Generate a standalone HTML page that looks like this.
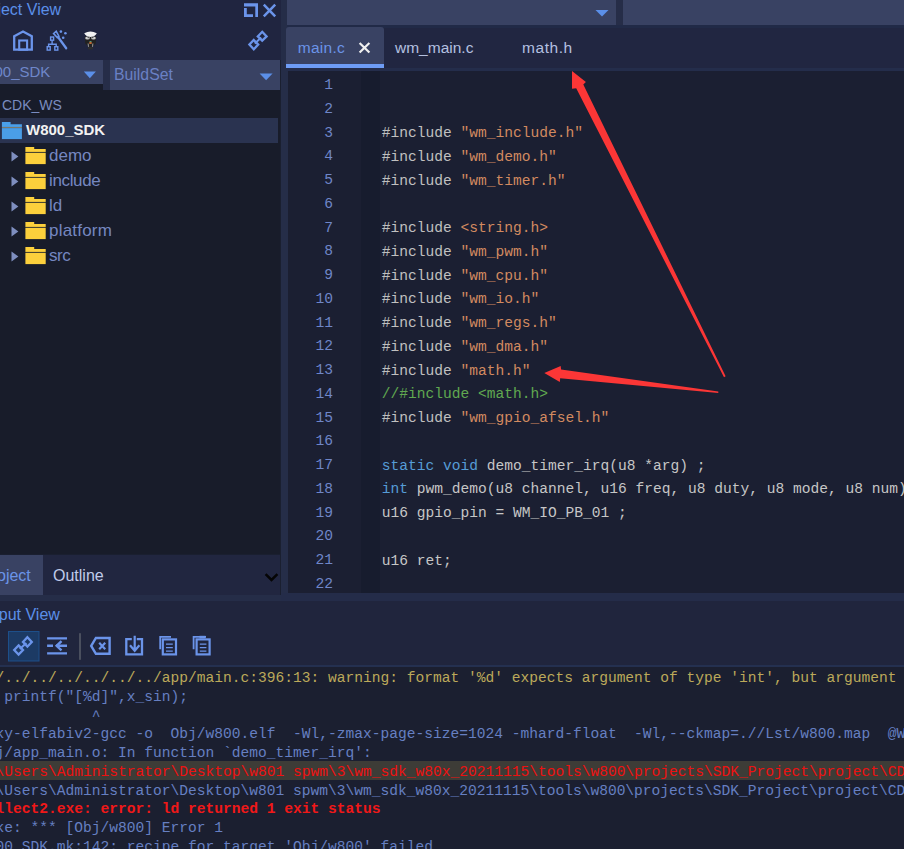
<!DOCTYPE html>
<html><head><meta charset="utf-8">
<style>
*{margin:0;padding:0;box-sizing:border-box}
html,body{width:904px;height:849px;overflow:hidden;background:#1a1f30;font-family:"Liberation Sans",sans-serif}
.a{position:absolute}
.t{position:absolute;white-space:pre;line-height:1}
.mono{font-family:"Liberation Mono",monospace}
i{font-style:normal}
.p{color:#c0c0c0}.s{color:#d28a60}.c{color:#60a850}.k{color:#569cd6}
.oy{color:#bba95a}.ob{color:#667fc2}.or{color:#ee1111}.orb{color:#f01818;font-weight:bold}
</style></head><body>
<!-- LEFT PANEL -->
<div class="a" style="left:0;top:0;width:280.5px;height:60px;background:#202540"></div>
<div class="t" style="left:-27.5px;top:1.5px;font-size:16px;color:#5b8fe8">Project View</div>
<!-- dropdowns -->
<div class="a" style="left:0;top:60px;width:280px;height:30px;background:#181c2a"></div>
<div class="a" style="left:0;top:60px;width:103px;height:24px;background:#394263"></div>
<div class="a" style="left:103px;top:60px;width:7px;height:30px;background:#262d48"></div>
<div class="a" style="left:110px;top:60px;width:170px;height:30px;background:#394263"></div>
<div class="t" style="left:-28px;top:64px;font-size:15px;color:#6f87c9">W800_SDK</div>
<div class="t" style="left:114px;top:66.8px;font-size:15.8px;color:#6a80c4">BuildSet</div>
<!-- tree -->
<div class="a" style="left:0;top:90px;width:280px;height:464px;background:#181c2a"></div>
<div class="a" style="left:0;top:118px;width:278px;height:25px;background:#2a3350"></div>
<div class="t" style="left:2px;top:98px;font-size:14px;color:#7a8cc0">CDK_WS</div>
<div class="t" style="left:26px;top:121.5px;font-size:15px;font-weight:bold;color:#f2f2f2">W800_SDK</div>
<div class="t" style="left:49px;top:147px;font-size:17px;letter-spacing:0px;color:#7587c0">demo</div>
<div class="t" style="left:49px;top:172px;font-size:17px;letter-spacing:-0.35px;color:#7587c0">include</div>
<div class="t" style="left:49px;top:197px;font-size:17px;letter-spacing:0px;color:#7587c0">ld</div>
<div class="t" style="left:49px;top:222px;font-size:17px;letter-spacing:0.2px;color:#7587c0">platform</div>
<div class="t" style="left:49px;top:247px;font-size:17px;letter-spacing:-0.4px;color:#7587c0">src</div>
<svg class="a" style="left:0;top:0" width="904" height="849" viewBox="0 0 904 849">
<path d="M11.5,151.5 L18.4,156.5 L11.5,161.4 Z" fill="#7f8fc0"/>
<path d="M11.5,176.5 L18.4,181.5 L11.5,186.4 Z" fill="#7f8fc0"/>
<path d="M11.5,201.5 L18.4,206.5 L11.5,211.4 Z" fill="#7f8fc0"/>
<path d="M11.5,226.5 L18.4,231.5 L11.5,236.4 Z" fill="#7f8fc0"/>
<path d="M11.5,251.5 L18.4,256.5 L11.5,261.4 Z" fill="#7f8fc0"/>
<path d="M25.4,146.9 H34.2 V148.95 H45.7 V151.9 H25.4 Z" fill="#fcd03c"/><rect x="25.4" y="151.9" width="20.3" height="1.1" fill="#4a4630"/><rect x="25.4" y="153" width="20.3" height="11.1" fill="#fcd03c"/>
<path d="M25.4,171.9 H34.2 V173.95 H45.7 V176.9 H25.4 Z" fill="#fcd03c"/><rect x="25.4" y="176.9" width="20.3" height="1.1" fill="#4a4630"/><rect x="25.4" y="178" width="20.3" height="11.1" fill="#fcd03c"/>
<path d="M25.4,196.9 H34.2 V198.95 H45.7 V201.9 H25.4 Z" fill="#fcd03c"/><rect x="25.4" y="201.9" width="20.3" height="1.1" fill="#4a4630"/><rect x="25.4" y="203" width="20.3" height="11.1" fill="#fcd03c"/>
<path d="M25.4,221.9 H34.2 V223.95 H45.7 V226.9 H25.4 Z" fill="#fcd03c"/><rect x="25.4" y="226.9" width="20.3" height="1.1" fill="#4a4630"/><rect x="25.4" y="228" width="20.3" height="11.1" fill="#fcd03c"/>
<path d="M25.4,246.9 H34.2 V248.95 H45.7 V251.9 H25.4 Z" fill="#fcd03c"/><rect x="25.4" y="251.9" width="20.3" height="1.1" fill="#4a4630"/><rect x="25.4" y="253" width="20.3" height="11.1" fill="#fcd03c"/>
<path d="M1.9,121.9 H10.6 V124.2 H21.9 V126.9 H1.9 Z" fill="#4aa0ec"/><rect x="1.9" y="126.9" width="20" height="1.2" fill="#78786e"/><rect x="1.9" y="128.1" width="20" height="11" fill="#4a9ee8"/>
</svg>
<!-- bottom tabs -->
<div class="a" style="left:0;top:554.5px;width:280px;height:40.5px;background:#212640"></div>
<div class="a" style="left:0;top:554.5px;width:43px;height:40.5px;background:#394263"></div>
<div class="t" style="left:-19px;top:568px;font-size:16px;color:#6b94e8">Project</div>
<div class="t" style="left:53px;top:568px;font-size:16px;color:#c0cbea">Outline</div>
<div class="a" style="left:0;top:594.5px;width:280.5px;height:6px;background:#252d48"></div>
<!-- vertical divider -->
<div class="a" style="left:280.5px;top:0;width:7.5px;height:601px;background:#252d48"></div>

<!-- EDITOR -->
<div class="a" style="left:287px;top:0;width:617px;height:25px;background:#394263"></div>
<div class="a" style="left:616px;top:0;width:7px;height:25px;background:#262d48"></div>
<div class="a" style="left:287px;top:25px;width:617px;height:43px;background:#212641"></div><div class="a" style="left:287px;top:25px;width:617px;height:3px;background:#212a47"></div>
<div class="a" style="left:286px;top:27px;width:98px;height:41px;background:#394263;border-radius:3px 3px 0 0"></div>
<div class="a" style="left:286px;top:64px;width:98px;height:4px;background:#6e9cf5"></div>
<div class="t" style="left:297.8px;top:40px;font-size:15.5px;letter-spacing:0.25px;color:#6b94e8">main.c</div>
<div class="t" style="left:395px;top:40px;font-size:15.5px;color:#b4c0e0">wm_main.c</div>
<div class="t" style="left:522px;top:40px;font-size:15.5px;letter-spacing:0.55px;color:#b4c0e0">math.h</div>
<div class="a" style="left:287px;top:68px;width:617px;height:3px;background:#242d4b"></div>
<div class="a" style="left:287.5px;top:71px;width:617px;height:522px;background:#1b1f32"></div>
<div class="a" style="left:361px;top:71px;width:19px;height:522px;background:#171c2e"></div>
<div class="a" style="left:280.5px;top:593px;width:624px;height:7.5px;background:#242c49"></div>

<!-- OUTPUT -->
<div class="a" style="left:0;top:600.5px;width:904px;height:64.5px;background:#20253d"></div>
<div class="t" style="left:-27px;top:607px;font-size:16px;color:#5b8fe8">Output View</div>
<div class="a" style="left:0;top:665px;width:904px;height:2.4px;background:#243050"></div>
<div class="a" style="left:0;top:667px;width:904px;height:182px;background:#1b1f30"></div>
<div class="t mono" id="nums" style="left:287px;top:74px;width:46px;text-align:right;font-size:14.58px;line-height:23.75px;color:#6f86c8">1
2
3
4
5
6
7
8
9
10
11
12
13
14
15
16
17
18
19
20
21
22</div>
<div class="t mono" id="code" style="left:381.8px;top:74.6px;font-size:14.58px;line-height:23.75px;color:#c6c6c6">

<i class="p">#include</i> <i class="s">"wm_include.h"</i>
<i class="p">#include</i> <i class="s">"wm_demo.h"</i>
<i class="p">#include</i> <i class="s">"wm_timer.h"</i>

<i class="p">#include</i> <i class="s">&lt;string.h&gt;</i>
<i class="p">#include</i> <i class="s">"wm_pwm.h"</i>
<i class="p">#include</i> <i class="s">"wm_cpu.h"</i>
<i class="p">#include</i> <i class="s">"wm_io.h"</i>
<i class="p">#include</i> <i class="s">"wm_regs.h"</i>
<i class="p">#include</i> <i class="s">"wm_dma.h"</i>
<i class="p">#include</i> <i class="s">"math.h"</i>
<i class="c">//#include &lt;math.h&gt;</i>
<i class="p">#include</i> <i class="s">"wm_gpio_afsel.h"</i>

<i class="k">static</i> <i class="k">void</i> demo_timer_irq(u8 *arg) ;
<i class="k">int</i> pwm_demo(u8 channel, u16 freq, u8 duty, u8 mode, u8 num);
u16 gpio_pin = WM_IO_PB_01 ;

u16 ret;
</div>
<div class="a" style="left:0;top:761px;width:904px;height:18.75px;background:#3d3c37"></div>
<div class="t mono" id="out" style="left:-22px;top:669px;font-size:14.58px;line-height:18.75px;color:#667fc2"><i class="oy">../../../../../../../app/main.c:396:13: warning: format '%d' expects argument of type 'int', but argument 2 has type 'double' [-Wformat=]</i>
<i class="ob">   printf("[%d]",x_sin);</i>
<i class="ob">             ^</i>
<i class="ob">csky-elfabiv2-gcc -o  Obj/w800.elf  -Wl,-zmax-page-size=1024 -mhard-float  -Wl,--ckmap=.//Lst/w800.map  @W800_SDK.link</i>
<i class="ob">Obj/app_main.o: In function `demo_timer_irq':</i>
<i class="or">C:\Users\Administrator\Desktop\w801 spwm\3\wm_sdk_w80x_20211115\tools\w800\projects\SDK_Project\project\CDK_Project\w800</i>
<i class="ob">C:\Users\Administrator\Desktop\w801 spwm\3\wm_sdk_w80x_20211115\tools\w800\projects\SDK_Project\project\CDK_Project\w800</i>
<i class="orb">collect2.exe: error: ld returned 1 exit status</i>
<i class="ob">make: *** [Obj/w800] Error 1</i>
<i class="ob">W800_SDK.mk:142: recipe for target 'Obj/w800' failed</i></div>
<svg class="a" style="left:0;top:0" width="904" height="849" viewBox="0 0 904 849">
<!-- header restore / close -->
<path d="M244,3.2 H258 V17 H255.3 V6.6 H244 Z" fill="#6b94ea"/>
<path d="M244,8.1 H246.8 V14.2 H253 V17 H244 Z" fill="#6b94ea"/>
<path d="M263.8,4.6 L275.2,16.3 M275.2,4.6 L263.8,16.3" stroke="#6b94ea" stroke-width="2.5"/>
<!-- house -->
<path d="M14.2,36.2 L23,31.6 L31.8,36.2 V49.7 H14.2 Z" fill="none" stroke="#6b94ea" stroke-width="2.3" stroke-linejoin="miter"/>
<rect x="19.2" y="40.5" width="7.9" height="9.2" fill="none" stroke="#6b94ea" stroke-width="2.1"/>
<!-- hierarchy + wand -->
<rect x="50.6" y="37" width="3" height="3.2" fill="none" stroke="#6b94ea" stroke-width="1.4"/>
<path d="M52.1,40.2 V44.2 M48.6,46.6 V44.2 H56.2 V46.6" fill="none" stroke="#6b94ea" stroke-width="1.4"/>
<rect x="47.2" y="46.7" width="3" height="3.4" fill="none" stroke="#6b94ea" stroke-width="1.4"/>
<rect x="54.8" y="46.7" width="3" height="3.4" fill="none" stroke="#6b94ea" stroke-width="1.4"/>
<path d="M53.6,33.5 L56.2,31.3 L58.9,36.2 L57.3,37.6 Z" fill="none" stroke="#6b94ea" stroke-width="1.6"/>
<path d="M58.2,37.2 L66.2,48.2" stroke="#6b94ea" stroke-width="2.3" stroke-linecap="round"/>
<circle cx="60.9" cy="31.6" r="1.3" fill="#6b94ea"/>
<circle cx="65.4" cy="33.3" r="1.3" fill="#6b94ea"/>
<circle cx="63.2" cy="37.8" r="1.3" fill="#6b94ea"/>
<!-- ghost icon -->
<path d="M84.2,33.2 Q90.5,29.8 96.8,33.2 Q95,36.6 90.5,37 Q86,36.6 84.2,33.2 Z" fill="#f2f2f2"/>
<path d="M84.8,36 Q90.5,37.8 96.2,36 L95.8,43.5 Q93,46.5 90.5,47 Q88,46.5 85.2,43.5 Z" fill="#222"/>
<ellipse cx="87.5" cy="38" rx="2.3" ry="1.6" fill="#cfcfcf"/>
<ellipse cx="93.5" cy="38" rx="2.3" ry="1.6" fill="#cfcfcf"/>
<circle cx="88.2" cy="37.6" r="0.7" fill="#222"/><circle cx="92.8" cy="37.6" r="0.7" fill="#222"/>
<rect x="89.5" y="41" width="2" height="1.2" fill="#5a9a78"/>
<rect x="89.3" y="42.2" width="2.4" height="1.6" fill="#e07535"/>
<path d="M88.1,43.5 L88.5,46.8 M92.9,43.5 L92.5,46.8" stroke="#9a9a9a" stroke-width="1"/>
<rect x="88" y="47" width="4.8" height="2.4" fill="#2e2e2e"/>
<!-- link icon header -->
<g fill="none" stroke="#6b94ea" stroke-width="2.3" stroke-linejoin="miter">
<path d="M262.2,31.8 L266.6,36.4 L262.2,40.6 L257.8,36.4 Z"/>
<path d="M253.8,40 L258.2,44.5 L253.8,49.2 L249.4,44.5 Z"/>
<path d="M261.2,37.6 L254.8,43.6" stroke-width="2"/>
</g>
<!-- dropdown arrows -->
<path d="M83.8,71.6 H95.9 L89.85,78.2 Z" fill="#5b8fe8"/>
<path d="M259.6,73.5 H272.6 L266.1,80.2 Z" fill="#5b8fe8"/>
<path d="M595.5,10 H608.5 L602,16.5 Z" fill="#5b8fe8"/>
<!-- tab close X -->
<path d="M359.6,43 L369.4,52.5 M369.4,43 L359.6,52.5" stroke="#f0f0f0" stroke-width="2.2"/>
<!-- outline chevron -->
<path d="M265.6,574.2 L271.5,580 L277.4,574.2" fill="none" stroke="#050505" stroke-width="2.5"/>
<!-- output toolbar -->
<rect x="8.5" y="631.5" width="30.5" height="29.5" fill="#1c3a64" stroke="#1d4f8a" stroke-width="1"/>
<g fill="none" stroke="#6b94ea" stroke-width="2.3">
<path d="M27.4,637.2 L31.8,642 L27.4,646.6 L23,642 Z"/>
<path d="M18.6,645.4 L23,650 L18.6,654.6 L14.2,650 Z"/>
<path d="M26.4,643 L19.8,649" stroke-width="2"/>
</g>
<g stroke="#6b94ea" stroke-width="2.4" fill="none">
<path d="M47.1,638.4 H67 M47.1,653.4 H67 M47.1,645.8 H53 M56,645.8 H67"/>
<path d="M61.5,641.2 L56.6,645.8 L61.5,650.4"/>
</g>
<rect x="79" y="633.2" width="2" height="26.6" fill="#4a4f5e"/>
<path d="M91.2,645.9 L95.9,638 H109.6 V653.8 H95.9 Z" fill="none" stroke="#6b94ea" stroke-width="2.4" stroke-linejoin="miter"/>
<path d="M99.2,642.7 L105.2,649.2 M105.2,642.7 L99.2,649.2" stroke="#6b94ea" stroke-width="2.2"/>
<path d="M131.8,639.2 H126.3 V654.4 H142 V639.2 H136.8" fill="none" stroke="#6b94ea" stroke-width="2.3"/>
<path d="M134.7,635.7 V650.5 M130,645.3 L134.7,650.8 L139.4,645.3" fill="none" stroke="#6b94ea" stroke-width="2.2"/>
<path d="M160.2,649.3 V636.8 H171" fill="none" stroke="#6b94ea" stroke-width="1.8"/>
<rect x="162.8" y="639.4" width="13.2" height="15" fill="none" stroke="#6b94ea" stroke-width="2.2"/>
<path d="M166,644.1 H172.8 M166,647.6 H172.8 M166,651.1 H172.8" stroke="#6b94ea" stroke-width="1.4"/>
<path d="M193.6,649.3 V636.8 H206" fill="none" stroke="#6b94ea" stroke-width="1.8"/>
<rect x="196.6" y="639.4" width="13" height="15" fill="none" stroke="#6b94ea" stroke-width="2.2"/>
<rect x="199.5" y="635.8" width="6" height="2.6" fill="#6b94ea"/>
<path d="M199.8,644.1 H206.4 M199.8,647.6 H206.4 M199.8,651.1 H206.4" stroke="#6b94ea" stroke-width="1.4"/>
<!-- red arrows -->
<path d="M544.3,373.1 L560.7,366.1 L561.1,369.6 L718.3,391.6 L718.3,393 L560.2,378.2 L559.8,382 Z" fill="#fb3636"/>
<path d="M572,71.1 L585.9,82.1 L583.3,84.5 L725.6,376.3 L724,377.3 L576.2,88.3 L572,88.7 Z" fill="#fb3636"/>
</svg>
</body></html>
